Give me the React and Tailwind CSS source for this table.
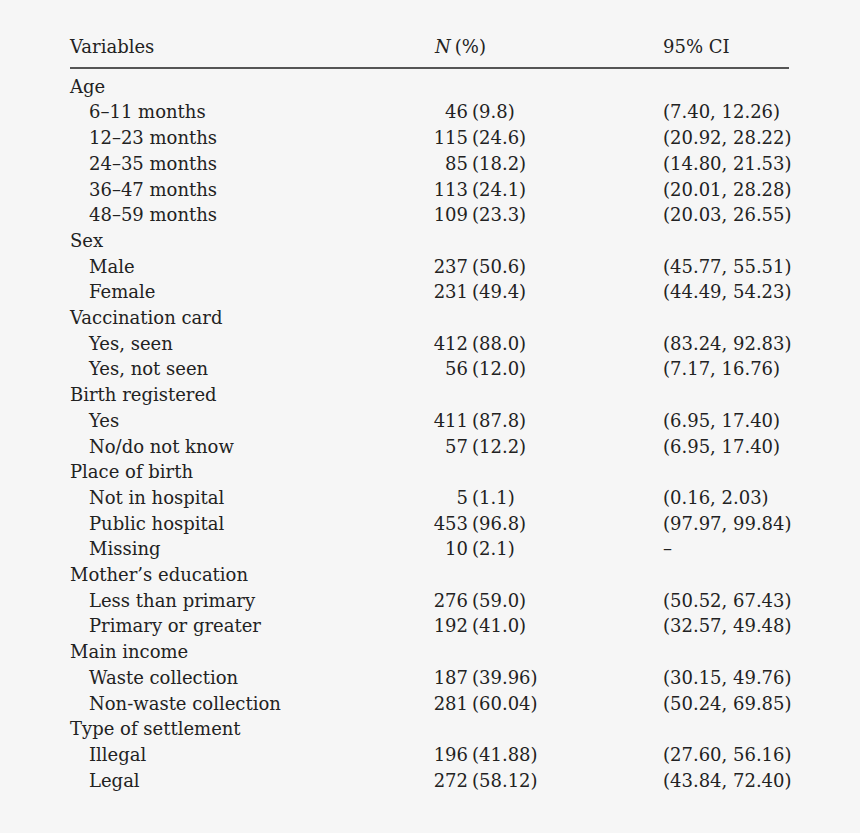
import React from "react";

const rows = [
  { label: "Age", head: true },
  { label: "6–11 months", n: "46", p: "(9.8)", ci: "(7.40, 12.26)" },
  { label: "12–23 months", n: "115", p: "(24.6)", ci: "(20.92, 28.22)" },
  { label: "24–35 months", n: "85", p: "(18.2)", ci: "(14.80, 21.53)" },
  { label: "36–47 months", n: "113", p: "(24.1)", ci: "(20.01, 28.28)" },
  { label: "48–59 months", n: "109", p: "(23.3)", ci: "(20.03, 26.55)" },
  { label: "Sex", head: true },
  { label: "Male", n: "237", p: "(50.6)", ci: "(45.77, 55.51)" },
  { label: "Female", n: "231", p: "(49.4)", ci: "(44.49, 54.23)" },
  { label: "Vaccination card", head: true },
  { label: "Yes, seen", n: "412", p: "(88.0)", ci: "(83.24, 92.83)" },
  { label: "Yes, not seen", n: "56", p: "(12.0)", ci: "(7.17, 16.76)" },
  { label: "Birth registered", head: true },
  { label: "Yes", n: "411", p: "(87.8)", ci: "(6.95, 17.40)" },
  { label: "No/do not know", n: "57", p: "(12.2)", ci: "(6.95, 17.40)" },
  { label: "Place of birth", head: true },
  { label: "Not in hospital", n: "5", p: "(1.1)", ci: "(0.16, 2.03)" },
  { label: "Public hospital", n: "453", p: "(96.8)", ci: "(97.97, 99.84)" },
  { label: "Missing", n: "10", p: "(2.1)", ci: "–" },
  { label: "Mother’s education", head: true },
  { label: "Less than primary", n: "276", p: "(59.0)", ci: "(50.52, 67.43)" },
  { label: "Primary or greater", n: "192", p: "(41.0)", ci: "(32.57, 49.48)" },
  { label: "Main income", head: true },
  { label: "Waste collection", n: "187", p: "(39.96)", ci: "(30.15, 49.76)" },
  { label: "Non-waste collection", n: "281", p: "(60.04)", ci: "(50.24, 69.85)" },
  { label: "Type of settlement", head: true },
  { label: "Illegal", n: "196", p: "(41.88)", ci: "(27.60, 56.16)" },
  { label: "Legal", n: "272", p: "(58.12)", ci: "(43.84, 72.40)" },
];

export default function App() {
  return (
    <div
      className="w-[860px] h-[833px] overflow-hidden bg-[#f6f6f6] text-[#222] text-[18px] leading-[25.7px] pt-[34px] pl-[70px] whitespace-nowrap"
      style={{ fontFamily: '"DejaVu Serif", serif' }}
    >
      <div className="w-[719px]">
        <div className="grid grid-cols-[346px_52px_195px_126px] pb-[7px]">
          <div>Variables</div>
          <div className="col-span-2 pl-[19px]">
            <span className="italic">N</span>
            <span className="pl-[4px]">(%)</span>
          </div>
          <div>95% CI</div>
        </div>
        <div className="h-[2px] bg-[#555]" />
        <div className="pt-[5px]">
          {rows.map((r, i) => (
            <div key={i} className="grid grid-cols-[346px_52px_195px_126px]">
              <div className={r.head ? "" : "pl-[19px]"}>{r.label}</div>
              <div className="text-right">{r.n || ""}</div>
              <div className="pl-[4px]">{r.p || ""}</div>
              <div>{r.ci || ""}</div>
            </div>
          ))}
        </div>
      </div>
    </div>
  );
}
